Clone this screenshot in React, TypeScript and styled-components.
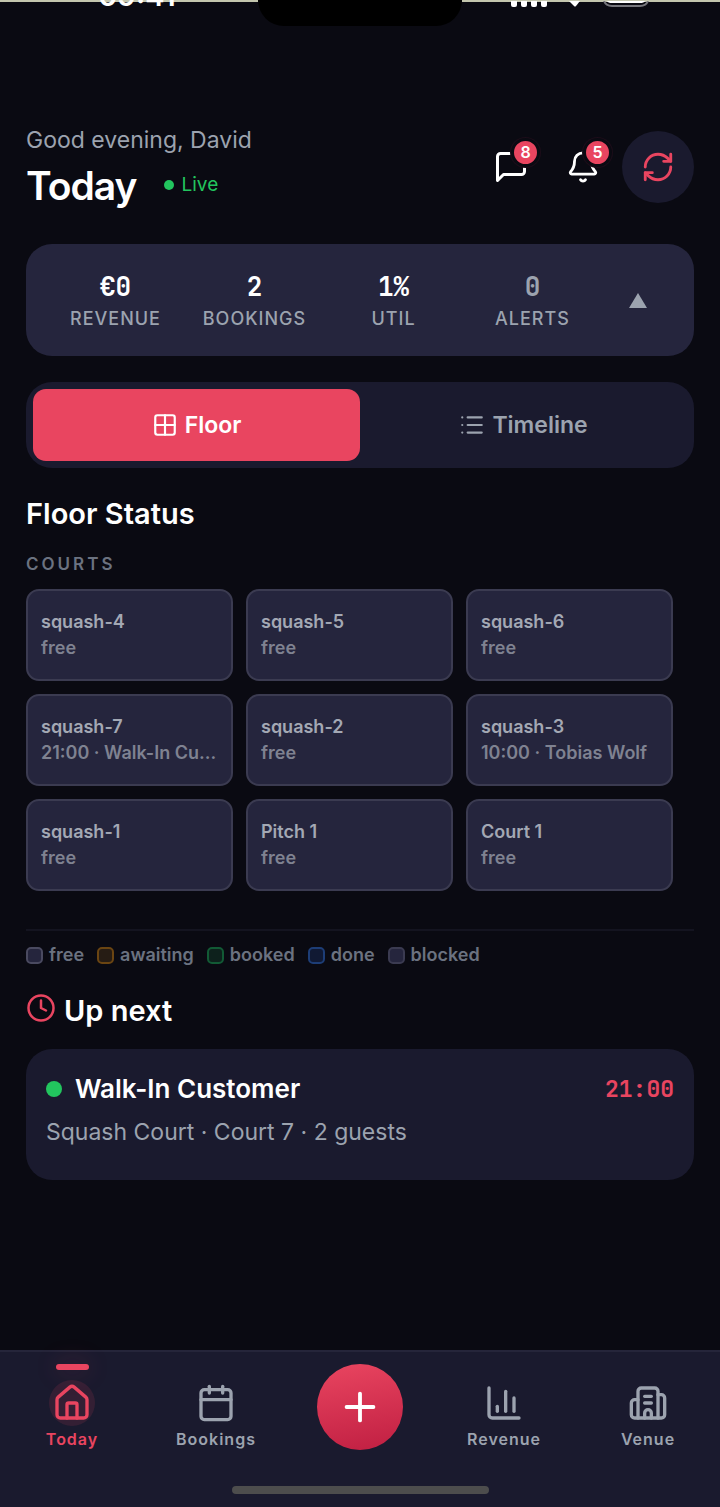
import React from 'react';
import styled, { createGlobalStyle, css } from 'styled-components';
import { Bell, Building2, Calendar, ChartColumn, Clock, Grid2x2, House, List, Plus, RefreshCw } from 'lucide-react';

const c = {
  bg: '#0a0a12',
  panel: '#1a1a2e',
  raised: '#25253d',
  accent: '#e94560',
  text: '#ffffff',
  muted: '#9ca3af',
  dim: '#6b7280',
  green: '#22c55e',
};

const GlobalStyle = createGlobalStyle`
  *, *::before, *::after { box-sizing: border-box; }
  body {
    margin: 0;
    background: ${c.bg};
    color: ${c.text};
    font-family: Inter, 'Liberation Sans', sans-serif;
  }
  h1, h2, h3, p, ul, dl, dd { margin: 0; padding: 0; }
  ul { list-style: none; }
  button { font: inherit; color: inherit; border: 0; padding: 0; background: none; cursor: pointer; }
  a { color: inherit; text-decoration: none; }
  svg { display: block; flex: none; }
`;

const Screen = styled.div`
  min-height: 100vh;
  display: flex;
  flex-direction: column;
`;

const StatusBar = styled.div`
  display: grid;
  grid-template-columns: 1fr 204px 1fr;
  height: 131px;
  align-items: start;
  overflow: hidden;
`;

const StatusSide = styled.div<{ $end?: boolean }>`
  display: flex;
  justify-content: center;
  align-items: flex-end;
  height: 7px;
  padding: ${(p) => (p.$end ? '0 22px 0 0' : '0 0 0 16px')};
  border-top: 2px solid #c3c6ae;
`;

const Time = styled.span`
  font-size: 29px;
  line-height: 22px;
  font-weight: 600;
`;

const Island = styled.div`
  height: 26px;
  background: #000;
  border-radius: 0 0 26px 26px;
`;

const Main = styled.main`
  flex: 1;
  padding: 0 26px;
`;

const Header = styled.header`
  display: flex;
  justify-content: space-between;
  align-items: flex-start;
  height: 113px;
`;

const Greeting = styled.p`
  font-size: 23px;
  line-height: 18px;
  color: ${c.muted};
`;

const TitleRow = styled.div`
  display: flex;
  align-items: center;
  gap: 28px;
  margin-top: 13px;
`;

const Title = styled.h1`
  font-size: 39px;
  line-height: 48px;
  font-weight: 600;
  letter-spacing: -1px;
`;

const Live = styled.span`
  display: flex;
  align-items: center;
  gap: 7px;
  padding-bottom: 3px;
  font-size: 19px;
  line-height: 24px;
  color: ${c.green};
`;

const Dot = styled.span<{ $size: number }>`
  width: ${(p) => p.$size}px;
  height: ${(p) => p.$size}px;
  border-radius: 50%;
  background: ${c.green};
`;

const Actions = styled.div`
  display: flex;
`;

const IconButton = styled.button<{ $filled?: boolean }>`
  position: relative;
  display: grid;
  place-items: center;
  width: 72px;
  height: 72px;
  border-radius: 50%;
  ${(p) => p.$filled && css`margin-left: 3px; background: ${c.panel}; color: ${c.accent};`}
`;

const CountBadge = styled.span`
  position: absolute;
  top: 7px;
  right: 7px;
  width: 29px;
  height: 29px;
  border: 3px solid ${c.bg};
  border-radius: 50%;
  background: ${c.accent};
  box-shadow: 0 0 0 1px #1c0d19;
  font-size: 16px;
  line-height: 22px;
  font-weight: 600;
  text-align: center;
`;

const Stats = styled.section`
  display: flex;
  align-items: center;
  height: 112px;
  padding: 0 20px;
  border-radius: 26px;
  background: ${c.raised};
`;

const StatList = styled.dl`
  flex: 1;
  display: grid;
  grid-template-columns: repeat(4, 1fr);
  margin: 6px 0 0;
`;

const Stat = styled.div`
  display: flex;
  flex-direction: column-reverse;
  align-items: center;
`;

const StatValue = styled.dd<{ $muted?: boolean }>`
  font-family: 'JetBrains Mono', 'Liberation Mono', monospace;
  font-size: 26px;
  line-height: 32px;
  font-weight: 700;
  color: ${(p) => (p.$muted ? c.muted : c.text)};
`;

const StatLabel = styled.dt`
  font-size: 18px;
  line-height: 32px;
  font-weight: 500;
  letter-spacing: 1px;
  color: ${c.muted};
`;

const Collapse = styled.button`
  width: 72px;
  height: 72px;
  display: grid;
  place-items: center;
  color: ${c.muted};
`;

const Tabs = styled.div`
  display: grid;
  grid-template-columns: 1fr 1fr;
  height: 86px;
  margin-top: 26px;
  padding: 7px;
  border-radius: 26px;
  background: ${c.panel};
`;

const Tab = styled.button<{ $active?: boolean }>`
  display: flex;
  align-items: center;
  justify-content: center;
  gap: 7px;
  border-radius: 13px;
  font-size: 23px;
  font-weight: 600;
  color: ${(p) => (p.$active ? c.text : c.muted)};
  background: ${(p) => (p.$active ? c.accent : 'transparent')};
`;

const Heading = styled.h2`
  display: flex;
  gap: 8px;
  font-size: 29px;
  line-height: 36px;
  font-weight: 600;
  font-optical-sizing: none;
`;

const FloorHeading = styled(Heading)`
  margin-top: 28px;
`;

const GroupLabel = styled.h3`
  margin: 20px 0 12px;
  font-size: 17px;
  line-height: 25px;
  font-weight: 600;
  letter-spacing: 3px;
  color: ${c.dim};
`;

const CourtGrid = styled.ul`
  display: grid;
  grid-template-columns: repeat(3, minmax(0, 1fr));
  gap: 13px;
  padding-right: 21px;
`;

const Court = styled.button`
  display: flex;
  flex-direction: column;
  justify-content: center;
  width: 100%;
  height: 92px;
  padding: 0 13px;
  border: 2px solid #3b3b51;
  border-radius: 13px;
  background: ${c.raised};
  font-size: 18px;
  line-height: 26px;
  font-weight: 600;
  text-align: left;
  color: #a3a8b4;
`;

const CourtState = styled.span`
  width: 100%;
  overflow: hidden;
  text-overflow: ellipsis;
  white-space: nowrap;
  color: #7f8291;
`;

const Legend = styled.ul`
  display: flex;
  gap: 13px;
  margin-top: 38px;
  padding-top: 11px;
  border-top: 2px solid #141420;
`;

const LegendItem = styled.li<{ $fill: string; $line: string }>`
  display: flex;
  align-items: center;
  gap: 6px;
  font-size: 18px;
  line-height: 26px;
  font-weight: 600;
  color: ${c.dim};
  &::before {
    content: '';
    width: 17px;
    height: 17px;
    border: 2px solid ${(p) => p.$line};
    border-radius: 5px;
    background: ${(p) => p.$fill};
  }
`;

const NextHeading = styled(Heading)`
  margin-top: 25px;
`;

const ClockMark = styled.span`
  color: ${c.accent};
`;

const NextCard = styled.article`
  height: 131px;
  margin-top: 20px;
  padding: 20px;
  border-radius: 26px;
  background: ${c.panel};
`;

const NextTop = styled.div`
  display: flex;
  align-items: center;
  gap: 13px;
`;

const Guest = styled.h3`
  flex: 1;
  font-size: 26px;
  line-height: 40px;
  font-weight: 600;
  font-optical-sizing: none;
`;

const NextTime = styled.time`
  font-family: 'JetBrains Mono', 'Liberation Mono', monospace;
  font-size: 23px;
  font-weight: 600;
  color: ${c.accent};
`;

const NextDetail = styled.p`
  margin-top: 7px;
  font-size: 23px;
  line-height: 32px;
  color: ${c.muted};
`;

const BottomBar = styled.footer`
  height: 157px;
  border-top: 2px solid #25253a;
  background: ${c.panel};
`;

const Nav = styled.nav`
  display: grid;
  grid-template-columns: repeat(5, 1fr);
  height: 134px;
`;

const NavLink = styled.a<{ $active?: boolean }>`
  position: relative;
  display: flex;
  flex-direction: column;
  align-items: center;
  padding-top: 28px;
  font-size: 16px;
  line-height: 26px;
  font-weight: 600;
  letter-spacing: 1px;
  color: ${(p) => (p.$active ? c.accent : c.muted)};
  ${(p) =>
    p.$active &&
    css`
      &::before {
        content: '';
        position: absolute;
        top: 12px;
        width: 33px;
        height: 6px;
        border-radius: 3px;
        background: ${c.accent};
        box-shadow: 0 0 24px rgba(233, 69, 96, 0.3);
      }
    `}
`;

const NavIcon = styled.span<{ $active?: boolean }>`
  display: grid;
  place-items: center;
  width: 46px;
  height: 46px;
  border-radius: 50%;
  background: ${(p) => (p.$active ? 'rgba(233, 69, 96, 0.13)' : 'transparent')};
`;

const AddButton = styled.button`
  display: grid;
  place-items: center;
  width: 86px;
  height: 86px;
  margin: 12px auto 0;
  border-radius: 50%;
  background: linear-gradient(170deg, #e94560, #c01f42);
`;

const HomeIndicator = styled.div`
  width: 257px;
  height: 8px;
  margin: 0 auto;
  border-radius: 4px;
  background: #4d4d4d;
`;

const stats = [
  { label: 'REVENUE', value: '€0' },
  { label: 'BOOKINGS', value: '2' },
  { label: 'UTIL', value: '1%' },
  { label: 'ALERTS', value: '0', muted: true },
];

const courts = [
  ['squash-4', 'free'],
  ['squash-5', 'free'],
  ['squash-6', 'free'],
  ['squash-7', '21:00 · Walk-In Customer'],
  ['squash-2', 'free'],
  ['squash-3', '10:00 · Tobias Wolf'],
  ['squash-1', 'free'],
  ['Pitch 1', 'free'],
  ['Court 1', 'free'],
];

const legend = [
  ['free', '#25253d', '#4a4a60'],
  ['awaiting', '#261c14', '#6b4512'],
  ['booked', '#0d211c', '#125a35'],
  ['done', '#101933', '#1d3d76'],
  ['blocked', '#25253d', '#3b3b51'],
];

export default function App() {
  return (
    <Screen>
      <GlobalStyle />
      <StatusBar>
        <StatusSide><Time>09:41</Time></StatusSide>
        <Island />
        <StatusSide $end>
          <svg width="138" height="6" viewBox="0 0 138 6" fill="#fff" aria-hidden="true">
            <path d="M0 0h6v4q0 2-2 2H2q-2 0-2-2zM10 0h6v4q0 2-2 2h-2q-2 0-2-2zM20 0h6v4q0 2-2 2h-2q-2 0-2-2zM30 0h6v4q0 2-2 2h-2q-2 0-2-2z" />
            <path d="M58 0h11l-4 5q-1 1-2 0z" />
            <path d="M96 0h38q-1 2-5 2h-28q-4 0-5-2z" />
            <path d="M93 0q2 5 8 5h28q6 0 8-5" fill="none" stroke="#77777d" strokeWidth="2" />
          </svg>
        </StatusSide>
      </StatusBar>

      <Main>
        <Header>
          <div>
            <Greeting>Good evening, David</Greeting>
            <TitleRow>
              <Title>Today</Title>
              <Live><Dot $size={10} />Live</Live>
            </TitleRow>
          </div>
          <Actions>
            <IconButton aria-label="Messages">
              <svg width="36" height="36" viewBox="0 0 24 24" fill="none" stroke="currentColor" strokeWidth="2" strokeLinecap="round" strokeLinejoin="round">
                <path d="M21 15a2 2 0 0 1-2 2H7l-4 4V5a2 2 0 0 1 2-2h14a2 2 0 0 1 2 2z" />
              </svg>
              <CountBadge>8</CountBadge>
            </IconButton>
            <IconButton aria-label="Notifications">
              <Bell size={34} strokeWidth={2} />
              <CountBadge>5</CountBadge>
            </IconButton>
            <IconButton $filled aria-label="Refresh">
              <RefreshCw size={34} strokeWidth={2} />
            </IconButton>
          </Actions>
        </Header>

        <Stats aria-label="Key figures">
          <StatList>
            {stats.map((s) => (
              <Stat key={s.label}>
                <StatLabel>{s.label}</StatLabel>
                <StatValue $muted={s.muted}>{s.value}</StatValue>
              </Stat>
            ))}
          </StatList>
          <Collapse aria-label="Collapse">
            <svg width="18" height="15" viewBox="0 0 18 15" fill="currentColor"><path d="M9 0l9 15H0z" /></svg>
          </Collapse>
        </Stats>

        <Tabs role="tablist">
          <Tab $active role="tab" aria-selected="true"><Grid2x2 size={26} strokeWidth={2} />Floor</Tab>
          <Tab role="tab" aria-selected="false"><List size={26} strokeWidth={2} />Timeline</Tab>
        </Tabs>

        <section>
          <FloorHeading>Floor Status</FloorHeading>
          <GroupLabel>COURTS</GroupLabel>
          <CourtGrid>
            {courts.map(([name, state]) => (
              <li key={name}>
                <Court>
                  <span>{name}</span>
                  <CourtState>{state}</CourtState>
                </Court>
              </li>
            ))}
          </CourtGrid>
          <Legend>
            {legend.map(([name, fill, line]) => (
              <LegendItem key={name} $fill={fill} $line={line}>{name}</LegendItem>
            ))}
          </Legend>
        </section>

        <section>
          <NextHeading>
            <ClockMark><Clock size={30} strokeWidth={2} /></ClockMark>
            Up next
          </NextHeading>
          <NextCard>
            <NextTop>
              <Dot $size={16} />
              <Guest>Walk-In Customer</Guest>
              <NextTime>21:00</NextTime>
            </NextTop>
            <NextDetail>Squash Court · Court 7 · 2 guests</NextDetail>
          </NextCard>
        </section>
      </Main>

      <BottomBar>
        <Nav aria-label="Main">
          <NavLink href="#today" $active aria-current="page"><NavIcon $active><House size={40} /></NavIcon>Today</NavLink>
          <NavLink href="#bookings"><NavIcon><Calendar size={40} /></NavIcon>Bookings</NavLink>
          <AddButton aria-label="Add"><Plus size={46} strokeWidth={2} /></AddButton>
          <NavLink href="#revenue"><NavIcon><ChartColumn size={40} /></NavIcon>Revenue</NavLink>
          <NavLink href="#venue"><NavIcon><Building2 size={40} /></NavIcon>Venue</NavLink>
        </Nav>
        <HomeIndicator />
      </BottomBar>
    </Screen>
  );
}
